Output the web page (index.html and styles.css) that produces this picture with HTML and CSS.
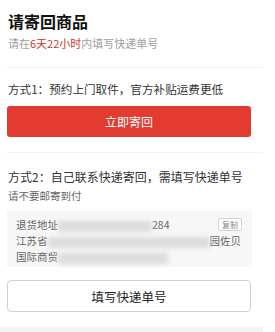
FILE: index.html
```html
<!DOCTYPE html>
<html lang="zh">
<head>
  <meta charset="UTF-8">
  <meta name="viewport" content="width=device-width, initial-scale=1">
  <title>请寄回商品</title>
  <link rel="stylesheet" href="styles.css">
</head>
<body>

<div class="page">
  <!-- Header -->
  <div class="header">
    <div class="title">请寄回商品</div>
    <div class="deadline">请在<span class="hl">6天22小时</span>内填写快递单号</div>
  </div>

  <!-- Option 1 -->
  <div class="section section-one">
    <div class="way">方式1：预约上门取件，官方补贴运费更低</div>
    <button class="send-btn">立即寄回</button>
  </div>

  <!-- Option 2 -->
  <div class="section section-two">
    <div class="way way-two">方式2：自己联系快递寄回，需填写快递单号</div>
    <div class="note">请不要邮寄到付</div>

    <div class="address-box">
      <div class="addr-line first">
        <span>退货地址<span class="mask mask-a"></span>284</span>
        <span class="copy-btn">复制</span>
      </div>
      <div class="addr-line">江苏省<span class="mask mask-b"></span>园佐贝</div>
      <div class="addr-line">国际商贸<span class="mask mask-c"></span></div>
    </div>

    <button class="fill-btn">填写快递单号</button>
  </div>
</div>

<div class="footer-band"></div>

</body>
</html>
```

FILE: styles.css
```css
body {
  margin: 0;
  font-family: "Noto Sans CJK SC", "Noto Sans", sans-serif;
  background-color: #fff;
  color: #333;
}
.page {
  width: 256px;
  padding-left: 7px;
}
.header {
  height: 57px;
  padding-top: 10px;
  border-bottom: 1px solid #f2f2f2;
}
.title {
  font-size: 16px;
  font-weight: bold;
  line-height: 22px;
  color: #111;
  padding-left: 1px;
}
.deadline {
  margin-top: 3px;
  font-size: 11px;
  line-height: 16px;
  color: #a0a0a0;
  padding-left: 1px;
}
.deadline .hl {
  color: #c8372f;
}
.section {
  border-bottom: 1px solid #f2f2f2;
}
.section-one {
  padding-top: 12px;
  padding-bottom: 15px;
}
.way {
  font-size: 11.6px;
  line-height: 18px;
  padding-left: 1px;
}
.send-btn, .fill-btn {
  display: block;
  width: 244px;
  font-family: inherit;
  cursor: pointer;
}
.send-btn {
  margin-top: 8px;
  height: 31px;
  border: none;
  border-radius: 3px;
  background-color: #e23b2f;
  color: #fff;
  font-size: 12px;
}
.section-two {
  padding-top: 14px;
  border-bottom: none;
}
.way-two {
  font-size: 12px;
  line-height: 20px;
}
.note {
  margin-top: 2px;
  font-size: 10.5px;
  line-height: 14px;
  color: #666;
  padding-left: 1px;
}
.address-box {
  margin-top: 8px;
  width: 245px;
  box-sizing: border-box;
  height: 56px;
  padding: 5px 10px 2px 9px;
  background-color: #f7f7f7;
  font-size: 10.5px;
  color: #666;
}
.addr-line {
  line-height: 16px;
  white-space: nowrap;
}
.addr-line.first {
  display: flex;
  justify-content: space-between;
  align-items: center;
  line-height: 17px;
}
.copy-btn {
  font-size: 8px;
  line-height: 11px;
  padding: 0 3px;
  border: 1px solid #d4d4d4;
  border-radius: 2px;
  background: #fff;
  color: #888;
}
.mask {
  display: inline-block;
  height: 11px;
  vertical-align: middle;
  background-color: #dcdcdc;
  filter: blur(2.5px);
}
.mask-a {
  width: 94px;
}
.mask-b {
  width: 162px;
}
.mask-c {
  width: 110px;
}
.fill-btn {
  margin-top: 13px;
  height: 32px;
  border: 1px solid #cfcfcf;
  border-radius: 4px;
  background: #fff;
  color: #222;
  font-size: 12.5px;
}
.footer-band {
  margin-top: 15px;
  width: 263px;
  height: 10px;
  background-color: #f3f3f3;
}
```
